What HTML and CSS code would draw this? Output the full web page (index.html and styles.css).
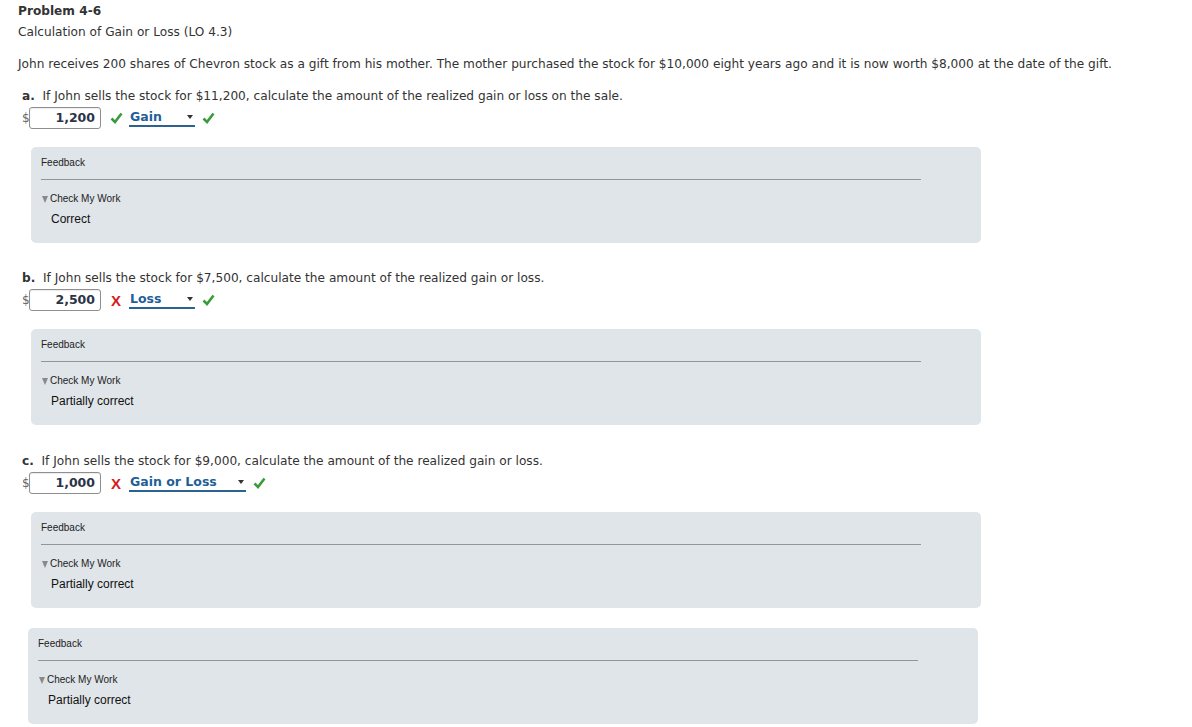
FILE: index.html
```html
<!DOCTYPE html>
<html>
<head>
<meta charset="utf-8">
<link rel="stylesheet" href="styles.css">
</head>
<body>
<div class="page">
  <div class="title">Problem 4-6</div>
  <div class="subtitle">Calculation of Gain or Loss (LO 4.3)</div>
  <p class="intro">John receives 200 shares of Chevron stock as a gift from his mother. The mother purchased the stock for $10,000 eight years ago and it is now worth $8,000 at the date of the gift.</p>

  <div class="part">
    <div class="question"><b>a.</b>&nbsp; If John sells the stock for $11,200, calculate the amount of the realized gain or loss on the sale.</div>
    <div class="answer-row">
      <span class="dollar">$</span>
      <span class="input">1,200</span>
      <span class="mark"><svg class="check" width="13" height="12" viewBox="0 0 13 12"><path d="M1.5 6.5 L5 10 L11.5 1.5" fill="none" stroke="#3b9a3b" stroke-width="2.6"/></svg></span>
      <span class="select w-short">Gain<span class="caret"></span></span>
      <span class="mark after"><svg class="check" width="13" height="12" viewBox="0 0 13 12"><path d="M1.5 6.5 L5 10 L11.5 1.5" fill="none" stroke="#3b9a3b" stroke-width="2.6"/></svg></span>
    </div>
    <div class="feedback">
      <div class="fb-label">Feedback</div>
      <div class="fb-rule"></div>
      <div class="fb-check"><span class="tri"></span>Check My Work</div>
      <div class="fb-result">Correct</div>
    </div>
  </div>

  <div class="part">
    <div class="question"><b>b.</b>&nbsp; If John sells the stock for $7,500, calculate the amount of the realized gain or loss.</div>
    <div class="answer-row">
      <span class="dollar">$</span>
      <span class="input">2,500</span>
      <span class="mark bad">X</span>
      <span class="select w-short">Loss<span class="caret"></span></span>
      <span class="mark after"><svg class="check" width="13" height="12" viewBox="0 0 13 12"><path d="M1.5 6.5 L5 10 L11.5 1.5" fill="none" stroke="#3b9a3b" stroke-width="2.6"/></svg></span>
    </div>
    <div class="feedback">
      <div class="fb-label">Feedback</div>
      <div class="fb-rule"></div>
      <div class="fb-check"><span class="tri"></span>Check My Work</div>
      <div class="fb-result">Partially correct</div>
    </div>
  </div>

  <div class="part">
    <div class="question spaced"><b>c.</b>&nbsp; If John sells the stock for $9,000, calculate the amount of the realized gain or loss.</div>
    <div class="answer-row">
      <span class="dollar">$</span>
      <span class="input">1,000</span>
      <span class="mark bad">X</span>
      <span class="select w-long">Gain or Loss<span class="caret"></span></span>
      <span class="mark after"><svg class="check" width="13" height="12" viewBox="0 0 13 12"><path d="M1.5 6.5 L5 10 L11.5 1.5" fill="none" stroke="#3b9a3b" stroke-width="2.6"/></svg></span>
    </div>
    <div class="feedback">
      <div class="fb-label">Feedback</div>
      <div class="fb-rule"></div>
      <div class="fb-check"><span class="tri"></span>Check My Work</div>
      <div class="fb-result">Partially correct</div>
    </div>
  </div>

  <div class="feedback final">
    <div class="fb-label">Feedback</div>
    <div class="fb-rule"></div>
    <div class="fb-check"><span class="tri"></span>Check My Work</div>
    <div class="fb-result">Partially correct</div>
  </div>
</div>
</body>
</html>
```

FILE: styles.css
```css
html, body {
  margin: 0;
  padding: 0;
  background: #ffffff;
}

body {
  font-family: "DejaVu Sans", Verdana, sans-serif;
  font-size: 12.15px;
  color: #333333;
}

.page {
  padding: 3px 0 0 18px;
}

.title {
  font-weight: bold;
  line-height: 17px;
}

.subtitle {
  margin-top: 4px;
  line-height: 17px;
}

.intro {
  margin: 15px 0 0 0;
  line-height: 17px;
}

.part {
  padding-left: 4px;
}

.question {
  margin-top: 15px;
  line-height: 17px;
}

.part + .part .question {
  margin-top: 27px;
}

.part + .part .question.spaced {
  margin-top: 28px;
}

.answer-row {
  display: flex;
  align-items: center;
  height: 22px;
  margin-top: 2px;
}

.dollar {
  color: #666666;
  width: 7px;
  font-size: 12px;
}

.input {
  box-sizing: border-box;
  width: 72px;
  height: 22px;
  border: 1px solid #8f8f8f;
  border-radius: 3px;
  text-align: right;
  padding-right: 5px;
  font-weight: bold;
  font-size: 12.5px;
  line-height: 20px;
  color: #2b3447;
  box-shadow: inset 0 1px 1px rgba(0,0,0,0.08);
}

.mark {
  display: flex;
  align-items: center;
  justify-content: center;
  margin-left: 8px;
  width: 14px;
  height: 16px;
}

.mark.bad {
  color: #d41c1c;
  font-weight: bold;
  font-family: "Liberation Sans", Arial, sans-serif;
  font-size: 15px;
}

.mark.after {
  margin-left: 6px;
}

.select {
  position: relative;
  box-sizing: border-box;
  margin-left: 6px;
  height: 18px;
  line-height: 15px;
  font-weight: bold;
  font-size: 12.5px;
  color: #1f5f97;
  border-bottom: 2px solid #2c628f;
  border-radius: 3px 3px 0 0;
  padding-left: 1px;
}

.select.w-short {
  width: 66px;
}

.select.w-long {
  width: 117px;
}

.caret {
  position: absolute;
  right: 2px;
  top: 6px;
  width: 0;
  height: 0;
  border-left: 3px solid transparent;
  border-right: 3px solid transparent;
  border-top: 4px solid #333333;
}

.feedback {
  box-sizing: border-box;
  width: 950px;
  height: 96px;
  margin: 18px 0 0 9px;
  background: #dfe5e9;
  border-radius: 5px;
  padding: 10px 0 0 10px;
  font-family: "Liberation Sans", Arial, sans-serif;
  color: #222222;
}

.feedback.final {
  margin: 20px 0 0 10px;
}

.fb-label {
  font-size: 10px;
  line-height: 12px;
}

.fb-rule {
  width: 880px;
  height: 0;
  border-top: 1px solid #8e979c;
  margin-top: 10px;
}

.fb-check {
  display: flex;
  align-items: center;
  margin-top: 13px;
  font-size: 10px;
  line-height: 12px;
  padding-left: 1px;
}

.tri {
  width: 0;
  height: 0;
  border-left: 3.5px solid transparent;
  border-right: 3.5px solid transparent;
  border-top: 7px solid #8a8a8a;
  margin-right: 2px;
}

.fb-result {
  margin-top: 7px;
  padding-left: 10px;
  font-size: 12px;
  line-height: 14px;
  color: #111111;
}
```
